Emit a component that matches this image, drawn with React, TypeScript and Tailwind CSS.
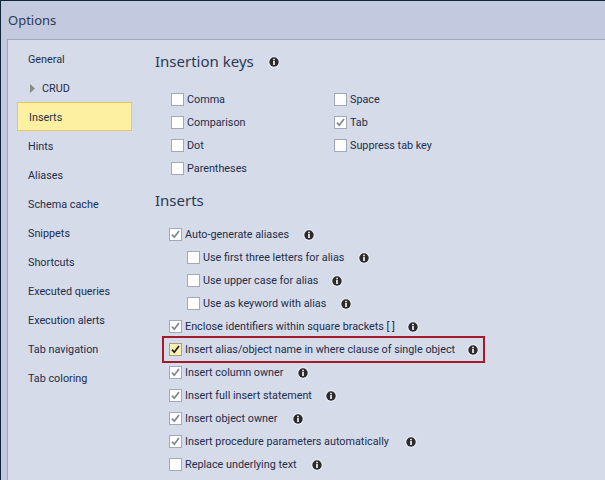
import React from 'react';

const navItems = ['General', 'CRUD', 'Inserts', 'Hints', 'Aliases', 'Schema cache', 'Snippets', 'Shortcuts', 'Executed queries', 'Execution alerts', 'Tab navigation', 'Tab coloring'];

const InfoIcon = () => (
    <svg width="12" height="12" viewBox="0 0 12 12" className="shrink-0">
        <circle cx="6" cy="6" r="6" fill="#e6e9f2" />
        <circle cx="6" cy="6" r="4.7" fill="#2b2b2b" />
        <rect x="5.2" y="2.8" width="1.6" height="1.5" fill="#fff" />
        <rect x="5.2" y="5" width="1.6" height="4" fill="#fff" />
    </svg>
);

const Checkbox = ({ checked, accent }: { checked?: boolean; accent?: boolean }) => (
    <span className={`flex h-[13px] w-[13px] shrink-0 items-center justify-center border ${accent ? 'border-[#a89f80] bg-[#fdf0b4]' : 'border-[#a2a8bc] bg-white'}`}>
        {checked && (
            <svg width="11" height="11" viewBox="0 0 11 11">
                <path d="M2 5.6 L4.3 8.2 L9 2" fill="none" stroke={accent ? '#1c1c1c' : '#7d8494'} strokeWidth="1.7" />
            </svg>
        )}
    </span>
);

// labelWidth holds the info icon at its column, whatever the text measures
const Option = ({ label, checked, labelWidth, indent, accent }: { label: string; checked?: boolean; labelWidth?: string; indent?: boolean; accent?: boolean }) => (
    <div className={`flex h-[23px] items-center ${indent ? 'pl-[18px]' : ''}`}>
        <Checkbox checked={checked} accent={accent} />
        <span className={`ml-[3px] whitespace-nowrap pt-[2px] ${labelWidth || ''}`}>{label}</span>
        {labelWidth && <InfoIcon />}
    </div>
);

export default function App() {
    return (
        <div className="flex h-[480px] w-[605px] flex-col overflow-hidden border-t border-l border-[#12263a] bg-[#c3cadf] font-['Roboto',sans-serif] text-[10.8px] text-[#232d4a]">
            <div className="flex h-[38px] shrink-0 items-center pt-[2px] pl-[7px] font-['Noto_Sans',sans-serif] text-[13px] text-[#2c3a52]">Options</div>
            <div className="ml-[6px] flex flex-1 border-t border-l border-[#a0a5c0] bg-[#d5dbe9]">
                <div className="w-[132px] shrink-0 pt-[4px] pl-[9px]">
                    {navItems.map((item) => (
                        <div
                            key={item}
                            className={`flex h-[29px] w-[115px] items-center pt-[3px] pl-[11px] ${item === 'Inserts' ? 'border border-[#eac566] bg-[#fdf0a0]' : ''}`}
                        >
                            {item === 'CRUD' && (
                                <svg width="5" height="9" viewBox="0 0 5 9" className="mr-[7px] ml-[2px] -translate-y-[1px]">
                                    <path d="M0 0 L5 4.5 L0 9 Z" fill="#8a8a8a" />
                                </svg>
                            )}
                            {item}
                        </div>
                    ))}
                </div>
                <div className="flex-1 pt-[9px] pl-[15px]">
                    <div className="flex h-[25px] items-center font-['Noto_Sans',sans-serif] text-[15px] text-[#2c3a52]">
                        Insertion keys
                        <span className="ml-[14px] flex">
                            <InfoIcon />
                        </span>
                    </div>
                    <div className="mt-[14px] ml-[16px] flex">
                        <div className="w-[163px]">
                            <Option label="Comma" />
                            <Option label="Comparison" />
                            <Option label="Dot" />
                            <Option label="Parentheses" />
                        </div>
                        <div>
                            <Option label="Space" />
                            <Option label="Tab" checked />
                            <Option label="Suppress tab key" />
                        </div>
                    </div>
                    <div className="mt-[8px] flex h-[25px] items-center font-['Noto_Sans',sans-serif] text-[15px] text-[#2c3a52]">Inserts</div>
                    <div className="mt-[10px] ml-[14px]">
                        <Option label="Auto-generate aliases" checked labelWidth="w-[118px]" />
                        <Option label="Use first three letters for alias" indent labelWidth="w-[155px]" />
                        <Option label="Use upper case for alias" indent labelWidth="w-[128px]" />
                        <Option label="Use as keyword with alias" indent labelWidth="w-[137px]" />
                        <Option label="Enclose identifiers within square brackets [ ]" checked labelWidth="w-[222px]" />
                        <div className="-my-[2px] -ml-[7px] flex h-[27px] w-[323px] items-center border-2 border-[#a31b2a] pl-[5px]">
                            <Option label="Insert alias/object name in where clause of single object" checked accent labelWidth="w-[282px]" />
                        </div>
                        <Option label="Insert column owner" checked labelWidth="w-[112px]" />
                        <Option label="Insert full insert statement" checked labelWidth="w-[140px]" />
                        <Option label="Insert object owner" checked labelWidth="w-[107px]" />
                        <Option label="Insert procedure parameters automatically" checked labelWidth="w-[220px]" />
                        <Option label="Replace underlying text" labelWidth="w-[126px]" />
                    </div>
                </div>
            </div>
        </div>
    );
}
